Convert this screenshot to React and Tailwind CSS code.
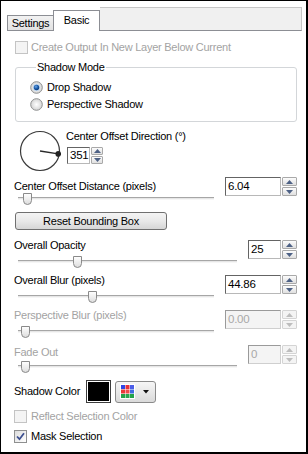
import React from "react";

const DIS = "text-[#a3a3a3]";

function UpDown({ disabled, w = "w-[15px]" }) {
  const arrow = disabled ? "#bdbdbd" : "#4d6185";
  const btn = disabled
    ? "border-[#d4d4d4] bg-[#f4f4f4]"
    : "border-[#a9a9a9] bg-linear-to-b from-[#fcfcfc] to-[#e0e0e0]";
  return (
    <div className={`flex flex-col gap-[1px] ${w} h-full`}>
      <div className={`flex-1 border ${btn} flex items-center justify-center rounded-[1px]`}>
        <svg width="7" height="4" viewBox="0 0 7 4">
          <path d="M0 4 L3.5 0 L7 4Z" fill={arrow} />
        </svg>
      </div>
      <div className={`flex-1 border ${btn} flex items-center justify-center rounded-[1px]`}>
        <svg width="7" height="4" viewBox="0 0 7 4">
          <path d="M0 0 L3.5 4 L7 0Z" fill={arrow} />
        </svg>
      </div>
    </div>
  );
}

function Spin({ value, fieldClass, disabled, h = "h-[19px]", btnW }) {
  const field = disabled
    ? "border-[#cfcfcf] border-t-[#9a9a9a] border-l-[#9a9a9a] bg-[#f4f4f4] text-[#a8a8a8]"
    : "border-[#b8b8b8] border-t-[#646464] border-l-[#646464] bg-white text-black";
  return (
    <div className={`flex ${h} gap-[1px] shrink-0`}>
      <div className={`${fieldClass} border ${field} flex items-center pl-[2px] text-[11.5px] leading-none`}>
        {value}
      </div>
      <UpDown disabled={disabled} w={btnW} />
    </div>
  );
}

function Slider({ trackClass, thumbClass }) {
  return (
    <div className={`relative h-[12px] ml-[4px] ${trackClass}`}>
      <div className="absolute left-0 right-0 top-[4px] h-[3px] border-t border-t-[#a6a6a6] bg-[#e6e6e6] border-b border-b-[#f6f6f6]" />
      <svg className={`absolute top-0 ${thumbClass}`} width="9" height="12" viewBox="0 0 9 12">
        <defs>
          <linearGradient id="th" x1="0" y1="0" x2="0" y2="1">
            <stop offset="0" stopColor="#ffffff" />
            <stop offset="1" stopColor="#dcdcdc" />
          </linearGradient>
        </defs>
        <path d="M0.5 0.5 H8.5 V7.5 A4 4 0 0 1 0.5 7.5 Z" fill="url(#th)" stroke="#8a8a8a" strokeWidth="1" />
      </svg>
    </div>
  );
}

function CheckBox({ checked, disabled }) {
  const box = disabled
    ? "border-[#c4c4c4] bg-[#f4f4f4]"
    : "border-[#8e8f8f] bg-linear-to-br from-[#dcdcdc] to-[#ffffff]";
  return (
    <div className={`w-[13px] h-[13px] border ${box} flex items-center justify-center shrink-0`}>
      {checked && (
        <svg width="9" height="9" viewBox="0 0 9 9">
          <path d="M1 4.5 L3.5 7.2 L8 1.2" fill="none" stroke="#3c4f8f" strokeWidth="1.8" />
        </svg>
      )}
    </div>
  );
}

function Radio({ checked }) {
  return (
    <svg width="13" height="13" viewBox="0 0 13 13" className="shrink-0">
      <defs>
        <radialGradient id="rb" cx="0.5" cy="0.5" r="0.5">
          <stop offset="0" stopColor="#ffffff" />
          <stop offset="1" stopColor="#d4d4d4" />
        </radialGradient>
        <radialGradient id="rd" cx="0.4" cy="0.35" r="0.6">
          <stop offset="0" stopColor="#6fa6e0" />
          <stop offset="0.6" stopColor="#1d5fb0" />
          <stop offset="1" stopColor="#0f3f80" />
        </radialGradient>
      </defs>
      <circle cx="6.5" cy="6.5" r="5.8" fill="url(#rb)" stroke="#8e8f8f" strokeWidth="1" />
      {checked && <circle cx="6.5" cy="6.5" r="3.6" fill="#bcd6f0" />}
      {checked && <circle cx="6.5" cy="6.5" r="2.7" fill="url(#rd)" />}
    </svg>
  );
}

function Dial() {
  const cx = 21, cy = 21;
  const a = (9 * Math.PI) / 180;
  const ex = cx + 18.5 * Math.cos(a);
  const ey = cy + 18.5 * Math.sin(a);
  return (
    <svg width="42" height="42" viewBox="0 0 42 42" className="shrink-0">
      <circle cx={cx} cy={cy} r="19.5" fill="none" stroke="#3a3a3a" strokeWidth="1.2" />
      <line x1={cx} y1={cy} x2={ex} y2={ey} stroke="#2a2a2a" strokeWidth="1.4" />
      <circle cx={ex} cy={ey} r="2.8" fill="#222" />
    </svg>
  );
}

function ColorGrid() {
  const c = [
    ["#2f45e6", "#e8313a", "#4c5ee8"],
    ["#e83a3a", "#f0494b", "#3f6ae2"],
    ["#24a24a", "#2aa84f", "#24a24a"],
  ];
  return (
    <svg width="15" height="15" viewBox="0 0 15 15">
      <rect x="0" y="0" width="15" height="15" fill="#ffffff" />
      {c.map((row, r) =>
        row.map((col, k) => (
          <rect key={r + "-" + k} x={1 + k * 4.5} y={1 + r * 4.5} width="4" height="4" fill={col} />
        ))
      )}
    </svg>
  );
}

export default function App() {
  return (
    <div className="w-[308px] h-[454px] bg-white border-t border-l border-r-2 border-b-2 border-black overflow-hidden font-['Liberation_Sans',Arial,sans-serif] text-[11px] tracking-[-0.25px] text-black leading-[13px]">
      {/* tab header */}
      <div className="flex items-end h-[30px] pl-[6px] pr-[4px]">
        <div className="h-[16px] w-[46px] border border-[#8c8e94] border-r-0 bg-linear-to-b from-[#f2f2f2] to-[#e2e2e2] flex items-center justify-center">
          Settings
        </div>
        <div className="h-[21px] w-[47px] border border-b-0 border-[#8c8e94] bg-white flex items-center justify-center pb-[2px]">
          Basic
        </div>
        <div className="flex-1 h-[24px] border border-l-0 border-[#c6c6c6] border-b-[#8c8e94] bg-[#f0f0f0]" />
      </div>

      <div className="pl-[13px] pr-[9px]">
        {/* create output */}
        <div className="flex items-center h-[14px] mt-[9px] ml-[1px] gap-[3px]">
          <CheckBox disabled />
          <span className={DIS}>Create Output In New Layer Below Current</span>
        </div>

        {/* shadow mode */}
        <fieldset className="mt-[7px] ml-[1px] border border-[#d3d6d9] rounded-[3px] pl-[14px] pb-[10px] pt-[6px]">
          <legend className="ml-[6px] px-[1px] leading-[13px]">Shadow Mode</legend>
          <div className="flex items-center h-[14px] gap-[4px]">
            <Radio checked />
            <span>Drop Shadow</span>
          </div>
          <div className="flex items-center h-[14px] gap-[4px] mt-[3px]">
            <Radio />
            <span>Perspective Shadow</span>
          </div>
        </fieldset>

        {/* dial */}
        <div className="flex mt-[8px] ml-[5px] gap-[5px]">
          <Dial />
          <div className="flex flex-col">
            <span>Center Offset Direction (°)</span>
            <div className="mt-[4px] ml-[1px]">
              <Spin value="351" fieldClass="w-[23px]" h="h-[17px]" btnW="w-[12px]" />
            </div>
          </div>
        </div>

        {/* distance */}
        <div className="flex items-center justify-between h-[19px] mt-[5px]">
          <span>Center Offset Distance (pixels)</span>
          <Spin value="6.04" fieldClass="w-[56px]" />
        </div>
        <div className="mt-[-3px]">
          <Slider trackClass="w-[196px]" thumbClass="left-[5px]" />
        </div>

        <button className="mt-[7px] ml-[1px] w-[152px] h-[18px] border border-[#707070] rounded-[3px] bg-linear-to-b from-[#f4f4f4] via-[#e9e9e9] to-[#d6d6d6] flex items-center justify-center text-[11px] tracking-[-0.25px]">
          Reset Bounding Box
        </button>

        {/* opacity */}
        <div className="flex items-start justify-between h-[19px] mt-[10px]">
          <span className="mt-[-1px]">Overall Opacity</span>
          <Spin value="25" fieldClass="w-[33px]" />
        </div>
        <div className="mt-[-3px]">
          <Slider trackClass="w-[219px]" thumbClass="left-[55px]" />
        </div>

        {/* blur */}
        <div className="flex items-start justify-between h-[19px] mt-[7px]">
          <span className="mt-[-1px]">Overall Blur (pixels)</span>
          <Spin value="44.86" fieldClass="w-[56px]" />
        </div>
        <div className="mt-[-3px]">
          <Slider trackClass="w-[196px]" thumbClass="left-[70px]" />
        </div>

        {/* perspective blur */}
        <div className="flex items-start justify-between h-[19px] mt-[7px]">
          <span className={`${DIS} mt-[-1px]`}>Perspective Blur (pixels)</span>
          <Spin value="0.00" fieldClass="w-[56px]" disabled />
        </div>
        <div className="mt-[-3px]">
          <Slider trackClass="w-[196px]" thumbClass="left-[3px]" />
        </div>

        {/* fade out */}
        <div className="flex items-start justify-between h-[19px] mt-[7px]">
          <span className={`${DIS} mt-[1px]`}>Fade Out</span>
          <Spin value="0" fieldClass="w-[33px]" disabled />
        </div>
        <div className="mt-[-3px]">
          <Slider trackClass="w-[219px]" thumbClass="left-[3px]" />
        </div>

        {/* shadow color */}
        <div className="flex items-center h-[23px] mt-[7px]">
          <span className="w-[72px]">Shadow Color</span>
          <div className="w-[25px] h-[23px] border border-[#3c3c3c] p-[1px] bg-white">
            <div className="w-full h-full bg-black" />
          </div>
          <div className="ml-[4px] w-[41px] h-[22px] border border-[#8a8a8a] rounded-[3px] bg-linear-to-b from-[#f6f6f6] to-[#dadada] flex items-center pl-[4px] gap-[8px]">
            <ColorGrid />
            <svg width="6" height="4" viewBox="0 0 6 4">
              <path d="M0 0 H6 L3 3.5Z" fill="#111" />
            </svg>
          </div>
        </div>

        <div className="flex items-center h-[13px] mt-[7px] gap-[4px]">
          <CheckBox disabled />
          <span className={DIS}>Reflect Selection Color</span>
        </div>
        <div className="flex items-center h-[13px] mt-[7px] gap-[4px]">
          <CheckBox checked />
          <span>Mask Selection</span>
        </div>
      </div>
    </div>
  );
}
